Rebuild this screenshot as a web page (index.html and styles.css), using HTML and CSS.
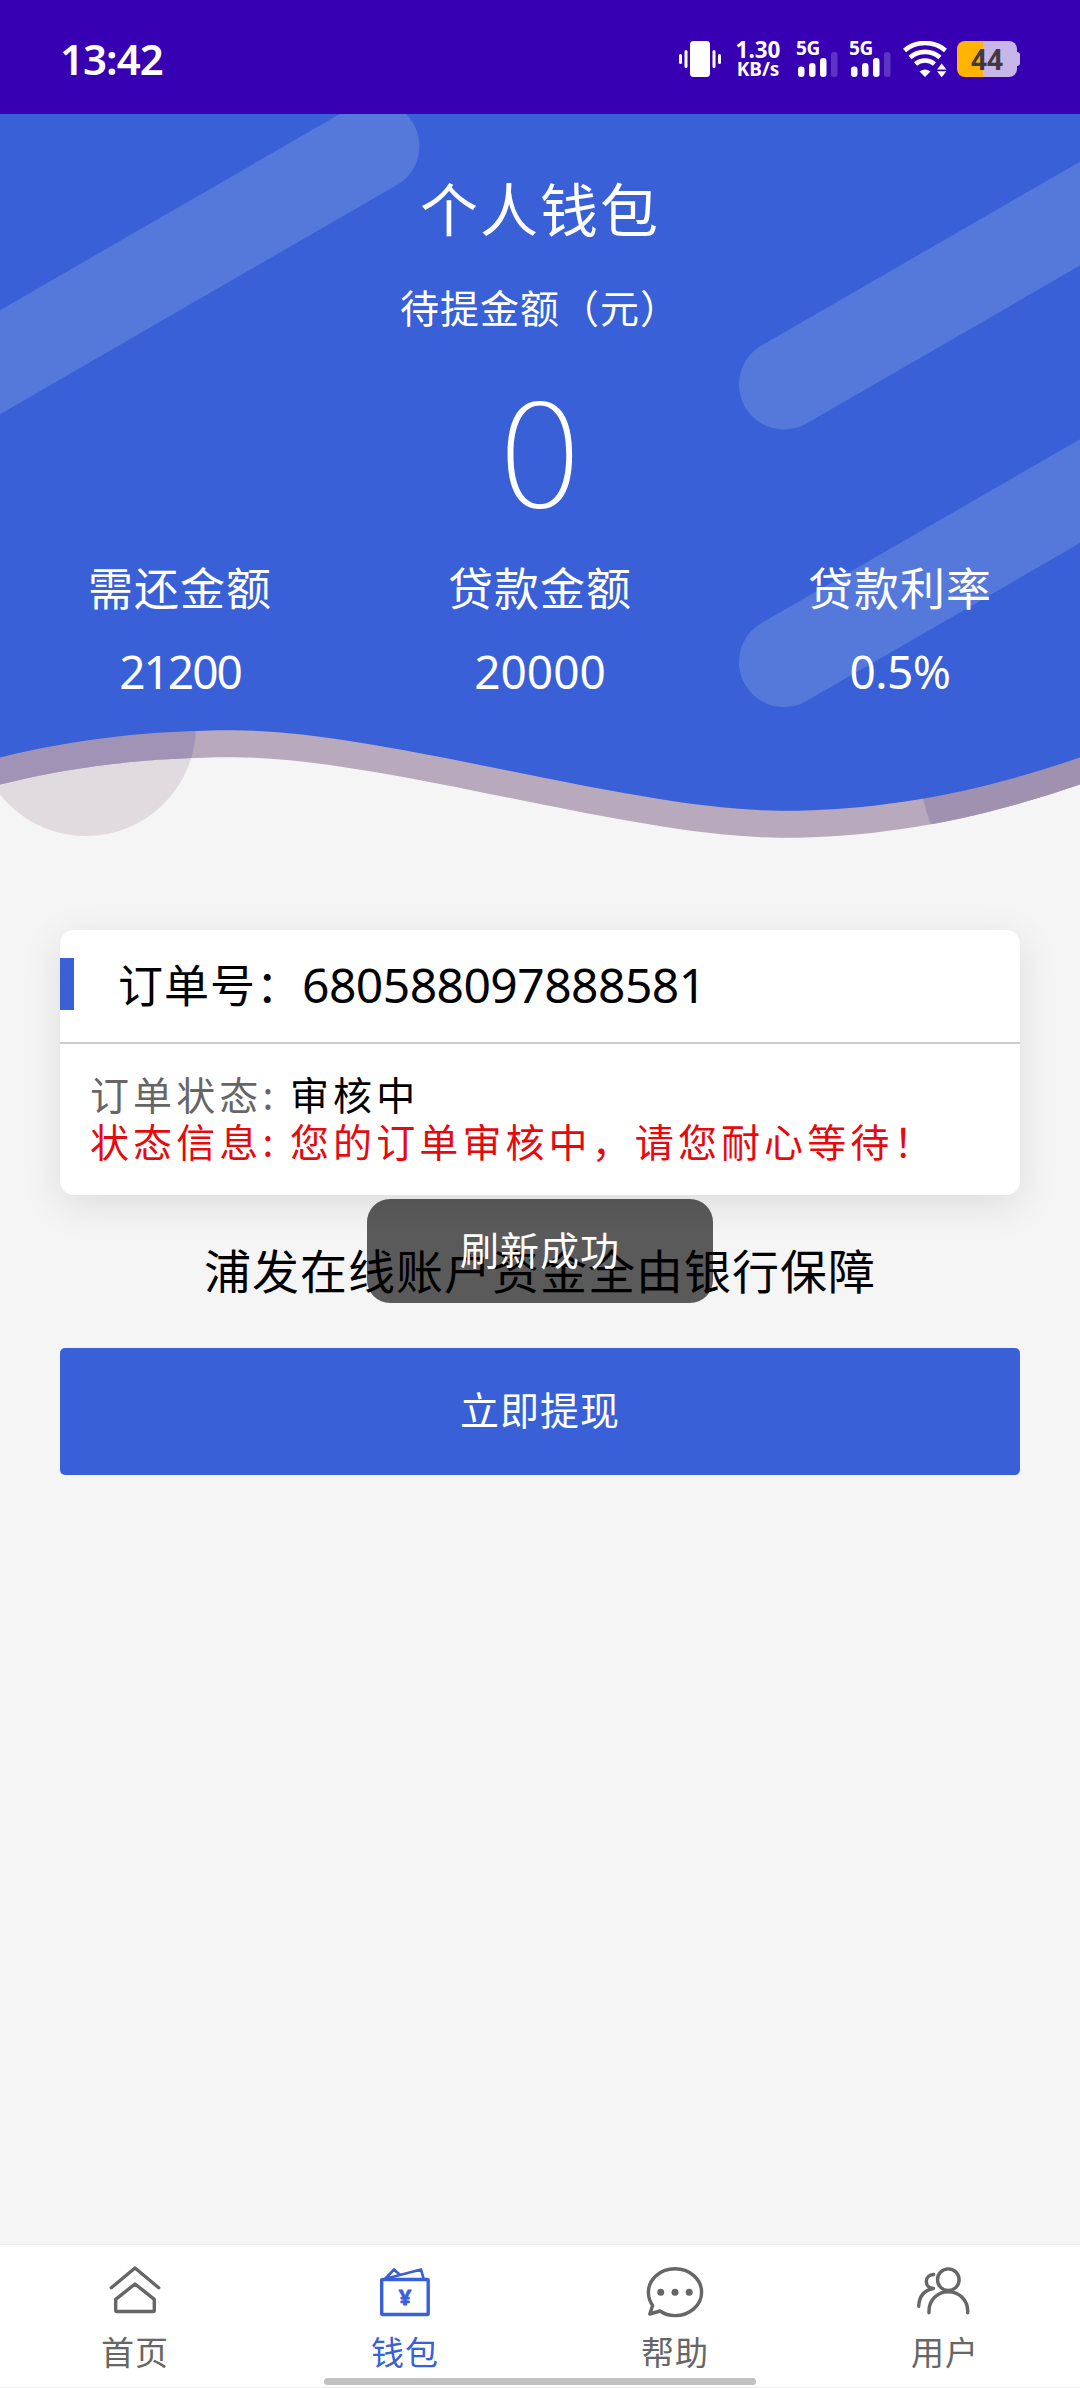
FILE: index.html
```html
<!DOCTYPE html>
<html lang="zh-CN">
<head>
<meta charset="utf-8">
<title>个人钱包</title>
<link rel="stylesheet" href="styles.css">
</head>
<body>
<div class="page">
  <header class="status">
    <span class="clock">13:42</span>
    <div class="indicators">
      <svg class="vibrate" width="42" height="36" viewBox="0 0 42 36" fill="#fff">
        <rect x="11" y="0" width="20" height="36" rx="3.5"/>
        <rect x="0" y="13" width="3" height="10" rx="1.5"/><rect x="5.500" y="9" width="3" height="18" rx="1.5"/>
        <rect x="33.500" y="9" width="3" height="18" rx="1.5"/><rect x="39" y="13" width="3" height="10" rx="1.5"/>
      </svg>
      <div class="speed"><span class="rate">1.30</span><span class="unit">KB/s</span></div>
      <div class="sim"><span class="net">5G</span>
        <svg width="40" height="26" viewBox="0 0 40 26" fill="#fff"><rect x="0" y="15.500" width="6.500" height="10.500" rx="3"/><rect x="11" y="12" width="6.500" height="14" rx="3"/><rect x="22" y="7" width="6.500" height="19" rx="3"/><rect x="33" y="1" width="6.500" height="25" rx="3" opacity=".2"/></svg>
      </div>
      <div class="sim"><span class="net">5G</span>
        <svg width="40" height="26" viewBox="0 0 40 26" fill="#fff"><rect x="0" y="15.500" width="6.500" height="10.500" rx="3"/><rect x="11" y="12" width="6.500" height="14" rx="3"/><rect x="22" y="7" width="6.500" height="19" rx="3"/><rect x="33" y="1" width="6.500" height="25" rx="3" opacity=".2"/></svg>
      </div>
      <svg class="wifi" width="45" height="36" viewBox="0 0 45 36" fill="none" stroke="#fff" stroke-width="4.600">
        <path d="M1.500 9.500C13-.500 31-.500 42.500 9.500"/><path d="M7 16.500C15.500 9 28.500 9 37 16.500"/><path d="M12.500 23C18 18.300 26 18.300 31.500 23"/>
        <path d="M16.500 30.500Q22 26.500 27.500 30.500L22 36Z" fill="#fff" stroke="none"/>
        <path d="M34 28.500l4.700-6 4.700 6zM34 30.300l4.700 6 4.700-6z" fill="#fff" stroke="none"/>
      </svg>
      <div class="battery">44</div>
    </div>
  </header>

  <section class="hero">
    <svg class="hero-bg" width="1080" height="726" viewBox="0 114 1080 726">
      <defs>
        <clipPath id="band"><path d="M0 784.500C75 766 150 757.300 234 757.300C384 757.300 631 837.700 781 837.700C890 837.700 985 817 1080 784.500V114H0Z"/></clipPath>
        <clipPath id="sea"><path d="M0 757.500C75 739 150 730.300 234 730.300C384 730.300 631 810.700 781 810.700C890 810.700 985 790 1080 757.500V114H0Z"/></clipPath>
      </defs>
      <circle cx="86" cy="726" r="110" fill="#e1dade"/>
      <g clip-path="url(#band)">
        <rect y="114" width="1080" height="726" fill="#b9a9bc"/>
        <circle cx="86" cy="726" r="110" fill="#a193b5"/>
        <path d="M922 795Q926 812 932 828L1080 840V740Z" fill="#a091b0"/>
      </g>
      <g clip-path="url(#sea)">
        <rect y="114" width="1080" height="726" fill="#3960d6"/>
        <g stroke="#5578db" stroke-width="90" stroke-linecap="round">
          <path d="M374.400 146L-100 419.900"/><path d="M784 384.500L1180 155.900"/><path d="M784 662L1180 433.400"/>
        </g>
      </g>
    </svg>
    <div class="hero-content">
      <h1 class="title">个人钱包</h1>
      <p class="subtitle">待提金额（元）</p>
      <p class="balance">0</p>
      <div class="stats">
        <div class="stat"><span>需还金额</span><span class="value tight">21200</span></div>
        <div class="stat"><span>贷款金额</span><span class="value">20000</span></div>
        <div class="stat"><span>贷款利率</span><span class="value rate-value">0.5%</span></div>
      </div>
    </div>
  </section>

  <main class="content">
    <article class="card">
      <div class="card-head"><span class="order-label">订单号：</span><span class="order-no">680588097888581</span></div>
      <div class="card-body">
        <p class="row"><span class="key">订单状态:</span><span>审核中</span></p>
        <p class="row alert"><span class="key">状态信息:</span><span>您的订单审核中，请您耐心等待！</span></p>
      </div>
    </article>
    <p class="promise">浦发在线账户资金全由银行保障</p>
    <button class="withdraw">立即提现</button>
  </main>

  <nav class="tabs">
    <a class="tab"><svg class="icon" viewBox="0 0 60 60"><path d="M6.300 27.700L30 8l23.700 19.700"/><path d="M30 24L49.300 39.300V50.300a1.200 1.200 0 0 1-1.200 1.200H11.900a1.200 1.200 0 0 1-1.200-1.200V39.300Z"/></svg><span>首页</span></a>
    <a class="tab active"><svg class="icon" viewBox="0 0 60 60"><rect x="6.700" y="19.500" width="46.500" height="35" rx="1"/><path d="M10 19L19 9.500l5.500 5M12.500 18.300L46 9.500l2.700 9.500" stroke-width="2.700"/><text class="yen" x="30" y="45">¥</text></svg><span>钱包</span></a>
    <a class="tab"><svg class="icon" viewBox="0 0 60 60"><path d="M7.600 45.500C4.800 41.500 3.400 37 3.400 32.300C3.400 19.200 15.400 8.800 30 8.800S56.600 19.200 56.600 32.300S44.600 55.600 30 55.600C24.400 55.600 19.200 54 15 51L4.800 54Z"/><g fill="#666" stroke="none"><circle cx="15.700" cy="32.300" r="3.500"/><circle cx="30" cy="32.300" r="3.500"/><circle cx="44.200" cy="32.300" r="3.500"/></g></svg><span>帮助</span></a>
    <a class="tab"><svg class="icon" viewBox="0 0 60 60"><circle cx="33.300" cy="19.700" r="10.800"/><path d="M14 52.700V51C14 40 22.500 31.700 33.300 31.700S52.700 40 52.700 51v1.700"/><path d="M18.700 14.500C14 14.800 11.300 18 11.300 21.500C11.300 25 14 28.200 18.500 28.500C10 30 4.200 36 3.700 46.300"/></svg><span>用户</span></a>
    <i class="gesture-bar"></i>
  </nav>

  <div class="toast">刷新成功</div>
</div>
</body>
</html>
```

FILE: styles.css
```css
* { box-sizing: border-box; margin: 0; padding: 0; }

body {
  background: #f5f5f5;
  color: #000;
  font-family: "Noto Sans CJK SC", sans-serif;
}

.page {
  position: relative;
  display: flex;
  flex-direction: column;
  width: 1080px;
  height: 2388px;
}

/* status bar */
.status {
  display: flex;
  align-items: center;
  justify-content: space-between;
  height: 114px;
  padding: 4px 60px 0 60px;
  background: #3700b3;
  color: #fff;
}
.clock {
  font: 600 42px/60px "Noto Sans", sans-serif;
  letter-spacing: -1px;
}
.indicators { display: flex; align-items: center; }
.vibrate { margin-right: 14px; }
.speed {
  display: flex;
  flex-direction: column;
  align-items: center;
  width: 46px;
  margin-right: 17px;
  font-family: "Noto Sans", sans-serif;
  font-weight: 700;
}
.rate { font-size: 22.5px; line-height: 20px; }
.unit { font-size: 19px; line-height: 19px; }
.sim {
  display: flex;
  flex-direction: column;
  width: 40px;
  height: 36px;
  margin-right: 13px;
}
.net {
  height: 10px;
  margin-left: -2px;
  font: 700 19px/14px "Noto Sans", sans-serif;
  letter-spacing: -.3px;
}
.wifi { margin: 0 9px 0 -1px; }
.battery {
  position: relative;
  width: 60px;
  height: 36px;
  margin-right: 3px;
  border-radius: 8px;
  background: linear-gradient(90deg, #ffb400 26px, #c8b6e8 26px);
  color: #42393c;
  font: 700 28px/36px "Noto Sans", sans-serif;
  text-align: center;
}
.battery::after {
  content: "";
  position: absolute;
  left: 60px;
  top: 11px;
  width: 3px;
  height: 14px;
  border-radius: 0 3px 3px 0;
  background: #c8b6e8;
}

/* wallet summary */
.hero { position: relative; height: 726px; color: #fff; }
.hero-bg { position: absolute; inset: 0; }
.hero-content { position: relative; padding-top: 57px; text-align: center; }
.title { font-size: 58px; font-weight: 400; line-height: 72px; letter-spacing: 2px; }
.subtitle { margin-top: 33px; font-size: 39px; line-height: 60px; letter-spacing: 1px; }
.balance {
  margin-top: 35px;
  font-size: 144px;
  font-weight: 100;
  line-height: 146px;
  transform: scaleX(1.09);
}
.stats {
  display: grid;
  grid-template-columns: repeat(3, 1fr);
  margin-top: 40px;
  font-size: 45px;
  line-height: 60px;
  letter-spacing: 1px;
}
.stat { display: flex; flex-direction: column; gap: 24px; }
.value { font-family: "Noto Sans", sans-serif; font-size: 46px; letter-spacing: 0; }
.tight { letter-spacing: -2px; }
.rate-value { letter-spacing: -.5px; }

/* order card */
.content { display: flex; flex-direction: column; padding: 90px 60px 0; }
.card {
  border-radius: 14px;
  background: #fff;
  box-shadow: 0 10px 40px rgba(0, 0, 0, .1);
}
.card-head {
  display: flex;
  align-items: center;
  height: 114px;
  padding-bottom: 4px;
  border-bottom: 2px solid #ccc;
  font-size: 45px;
  line-height: 52px;
  letter-spacing: 1px;
}
.card-head::before {
  content: "";
  width: 14px;
  height: 52px;
  margin-right: 44px;
  background: #3960d6;
}
.order-no {
  padding-top: 2px;
  font-family: "Noto Sans", sans-serif;
  font-size: 48px;
  letter-spacing: -.55px;
}
.card-body {
  padding: 26px 30px 31px;
  font-size: 39px;
  line-height: 47px;
  letter-spacing: 4.1px;
}
.row { display: flex; white-space: nowrap; }
.key { width: 200px; color: #666; }
.alert, .alert .key { color: #e60a0f; }

.promise {
  margin-top: 44px;
  font-size: 47px;
  line-height: 60px;
  letter-spacing: 1px;
  text-align: center;
}
.withdraw {
  height: 127px;
  margin-top: 49px;
  padding-bottom: 8px;
  border: 0;
  border-radius: 5px;
  background: #3960d6;
  color: #fff;
  font: 400 39px/60px "Noto Sans CJK SC", sans-serif;
  letter-spacing: 1px;
}

/* bottom navigation */
.tabs {
  position: relative;
  display: grid;
  grid-template-columns: repeat(4, 1fr);
  height: 144px;
  margin-top: auto;
  border-top: 1px solid #efefef;
  border-bottom: 1px solid #eee;
  background: #fff;
}
.tab {
  display: flex;
  flex-direction: column;
  align-items: center;
  gap: 11px;
  padding-top: 15px;
  color: #666;
  font-size: 33px;
  line-height: 40px;
  letter-spacing: 1px;
}
.active { color: #3960d6; }
.icon {
  width: 60px;
  height: 60px;
  fill: none;
  stroke: currentColor;
  stroke-width: 3.400;
  stroke-linecap: round;
  stroke-linejoin: round;
}
.yen {
  fill: currentColor;
  stroke: currentColor;
  stroke-width: .8;
  font: 700 22px "Noto Sans", sans-serif;
  letter-spacing: 0;
  text-anchor: middle;
}
.gesture-bar {
  position: absolute;
  left: 324px;
  bottom: 2px;
  width: 432px;
  height: 7px;
  border-radius: 4px;
  background: #c1c1c1;
}

.toast {
  position: absolute;
  left: 367px;
  top: 1199px;
  width: 346px;
  height: 104px;
  border-radius: 23px;
  background: rgba(0, 0, 0, .63);
  color: #fff;
  font-size: 39px;
  line-height: 98px;
  letter-spacing: 1px;
  text-align: center;
}
```
